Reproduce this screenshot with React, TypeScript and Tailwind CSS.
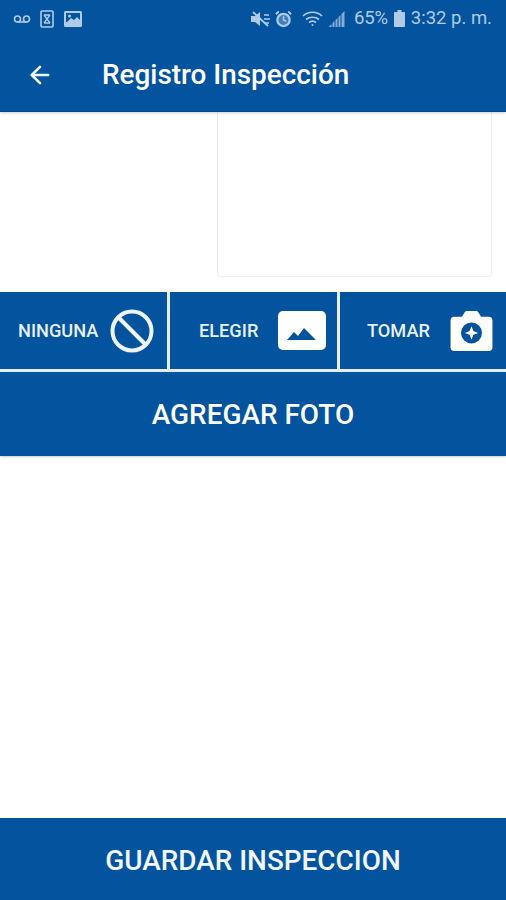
import React from "react";
import { ArrowLeft } from "lucide-react";

const BLUE = "bg-[#03539e]";

const StatusBar = () => (
  <div className="h-[37px] flex items-center pl-[13px] pr-[14px] text-[#b0cbe5]">
    <svg width="18" height="10" viewBox="0 0 18 10" fill="none" stroke="currentColor" strokeWidth="1.6">
      <circle cx="4.5" cy="5" r="3" />
      <circle cx="13.5" cy="5" r="3" />
      <path d="M4.5 8h9" />
    </svg>
    <svg className="ml-[9px]" width="14" height="18" viewBox="0 0 14 18" fill="none" stroke="currentColor" strokeWidth="1.6">
      <rect x="1" y="1" width="12" height="16" rx="1" />
      <path d="M4 5l6 8M10 5l-6 8M4 5h6M4 13h6" strokeWidth="1.3" />
    </svg>
    <svg className="ml-[10px]" width="18" height="16" viewBox="0 0 18 16">
      <rect width="18" height="16" rx="1.5" fill="currentColor" />
      <rect x="2" y="2" width="14" height="9" fill="#03539e" />
      <circle cx="5.5" cy="5" r="1.6" fill="currentColor" />
      <path d="M2 12l5-5 3 2 3-3 3 3v5H2z" fill="currentColor" />
    </svg>
    <div className="flex-1" />
    <svg width="20" height="16" viewBox="0 0 20 16" fill="currentColor">
      <path d="M0 5h4l5-4v14l-5-4H0z" />
      <path d="M2 1l15 14" stroke="currentColor" strokeWidth="1.8" />
      <path d="M13 4l5 0M13 8h6M13 12h5" stroke="currentColor" strokeWidth="1.4" />
    </svg>
    <svg className="ml-[4px]" width="17" height="18" viewBox="0 0 18 18">
      <circle cx="9" cy="10" r="6.5" fill="currentColor" fillOpacity="0.35" stroke="currentColor" strokeWidth="2.4" />
      <path d="M9 6v4l3 1.5" fill="none" stroke="currentColor" strokeWidth="1.6" />
      <path d="M1 4l3-3M17 4l-3-3" stroke="currentColor" strokeWidth="2" />
    </svg>
    <svg className="ml-[10px]" width="21" height="16" viewBox="0 0 21 16" fill="none" stroke="currentColor" strokeWidth="1.7">
      <path d="M1 5c5-5 14-5 19 0" />
      <path d="M4 8.500c3.500-3 9.500-3 13 0" />
      <path d="M7 11.500c2-1.500 5-1.500 7 0" />
      <circle cx="10.500" cy="14" r="1" fill="currentColor" stroke="none" />
    </svg>
    <svg className="ml-[5px]" width="19" height="16" viewBox="0 0 18 16" fill="currentColor" opacity="0.75">
      <path d="M0 16l3-3v3zM4 16v-4l2-2v6zM7 16V9l2-2v9zM10 16V6l2-2v12zM13 16V3l3-3v16z" />
    </svg>
    <span className="ml-[7px] text-[18.500px] leading-none tracking-[-0.2px]">65%</span>
    <svg className="ml-[6px]" width="11" height="17" viewBox="0 0 11 17" fill="currentColor">
      <path d="M3.500 0h4v2h2.500a1 1 0 011 1v13a1 1 0 01-1 1H1a1 1 0 01-1-1V3a1 1 0 011-1h2.500z" />
    </svg>
    <span className="ml-[6px] text-[18.500px] leading-none">3:32 p. m.</span>
  </div>
);

const OptionButton = ({ label, className, children }: { label: string; className: string; children: React.ReactNode }) => (
  <div className={`${BLUE} h-full flex items-center ${className}`}>
    <span className="text-[#e8f0f8] font-medium text-[18.200px] leading-none pt-[2px]">{label}</span>
    {children}
  </div>
);

export default function App() {
  return (
    <div className="w-[506px] h-[900px] flex flex-col bg-white font-['Roboto',sans-serif]">
      <div className={`${BLUE} h-[112px] shrink-0 border-b border-[#034a8c] shadow-[0_1px_3px_rgba(0,0,0,0.2)] z-10`}>
        <StatusBar />
        <div className="h-[75px] flex items-center pl-[26px]">
          <ArrowLeft size={28} color="#f2f6fb" strokeWidth={2.2} />
          <h1 className="ml-[48px] text-white font-medium text-[27.900px] leading-none pt-[1px]">Registro Inspección</h1>
        </div>
      </div>

      <div className="h-[180px] shrink-0 flex justify-end pr-[14px]">
        <div className="w-[275px] h-[165px] border-x border-b border-[#ececec] rounded-b-[4px]" />
      </div>

      <div className="h-[77px] shrink-0 flex">
        <OptionButton label="NINGUNA" className="w-[167px] pl-[18px]">
          <svg className="ml-[12px]" width="44" height="44" viewBox="0 0 44 44" fill="none" stroke="#eef4fa" strokeWidth="4">
            <circle cx="22" cy="22" r="19.500" />
            <path d="M8.500 8.500l27 27" />
          </svg>
        </OptionButton>
        <div className="w-[3px] bg-[#e6eef6]" />
        <OptionButton label="ELEGIR" className="w-[167px] pl-[29px]">
          <svg className="ml-[20px]" width="48" height="40" viewBox="0 0 48 40">
            <rect width="48" height="39" rx="5" fill="#fff" />
            <path d="M9 29l7-8 4 4 6-8 12 12z" fill="#03539e" />
          </svg>
        </OptionButton>
        <div className="w-[3px] bg-[#e6eef6]" />
        <OptionButton label="TOMAR" className="flex-1 pl-[27px]">
          <svg className="ml-[20px]" width="43" height="40" viewBox="0 0 44 42">
            <path d="M4 6h8l3-5q.5-1 2-1h10q1.500 0 2 1l3 5h8a4 4 0 014 4v28a4 4 0 01-4 4H4a4 4 0 01-4-4V10a4 4 0 014-4z" fill="#fff" />
            <circle cx="22" cy="23" r="11" fill="#03539e" />
            <path d="M22 16l2 5 5 2-5 2-2 5-2-5-5-2 5-2z" fill="#fff" />
          </svg>
        </OptionButton>
      </div>

      <div className="h-[3px] shrink-0 bg-[#e6eef6]" />

      <div className={`${BLUE} h-[84px] shrink-0 flex items-center justify-center text-white font-medium text-[27.900px] leading-none pt-[1px] shadow-[0_1px_2px_rgba(0,0,0,0.2)]`}>
        AGREGAR FOTO
      </div>

      <div className="flex-1" />

      <div className={`${BLUE} h-[82px] shrink-0 flex items-center justify-center text-[#f2f6fb] font-medium text-[27.900px] leading-none pt-[3px]`}>
        GUARDAR INSPECCION
      </div>
    </div>
  );
}
